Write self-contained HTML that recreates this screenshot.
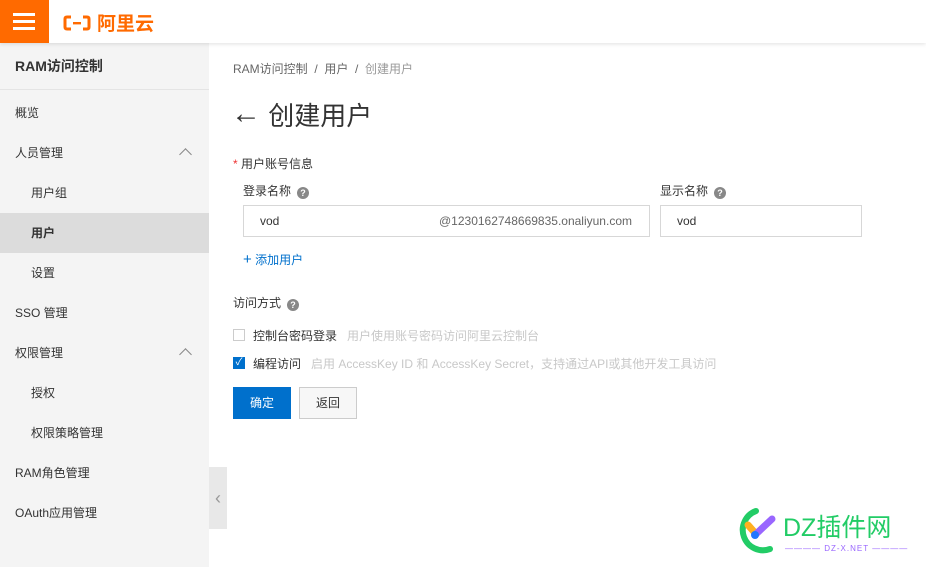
<!DOCTYPE html>
<html><head><meta charset="utf-8"><style>
*{margin:0;padding:0;box-sizing:border-box}
body{width:926px;height:567px;overflow:hidden;background:#fff;font-family:"Liberation Sans","Noto Sans CJK SC",sans-serif;color:#333;position:relative;font-size:12px}
.top{position:absolute;left:0;top:0;width:926px;height:43px;background:#fff;box-shadow:0 1px 4px rgba(0,0,0,.12);z-index:2}
.burger{position:absolute;left:0;top:0;width:49px;height:43px;background:#ff6a00}
.burger i{position:absolute;left:13px;width:22px;height:3px;background:#fff}
.logo{position:absolute;left:62px;top:9px;color:#ff6a00;font-size:19px;font-weight:bold;display:flex;align-items:center;gap:5px}
.side{position:absolute;left:0;top:43px;width:209px;height:524px;background:#f4f4f4}
.side .t{height:47px;line-height:47px;padding-left:15px;font-size:14px;font-weight:bold;color:#333;border-bottom:1px solid #e4e4e4}
.side div.i{position:absolute;left:0;width:209px;height:40px;line-height:40px;padding-left:15px;font-size:12px;color:#333}
.side div.s{padding-left:31px}
.side .act{background:#dcdcdc;font-weight:bold}
.chev{position:absolute;right:19px;top:17px;width:9px;height:9px;border-left:1px solid #888;border-top:1px solid #888;transform:rotate(45deg)}
.tab{position:absolute;left:209px;top:467px;width:18px;height:62px;background:#e8e8e8;color:#999;font-size:18px;line-height:62px;text-align:center}
.a{position:absolute;white-space:nowrap}
.q{display:inline-block;width:12px;height:12px;border-radius:50%;background:#888;color:#fff;font-size:9px;line-height:12px;text-align:center;font-weight:bold;vertical-align:-1px;margin-left:6px}
.inp{position:absolute;height:32px;border:1px solid #d7d7d7;line-height:30px;padding-left:16px;font-size:12px;color:#333}
.cb{position:absolute;width:12px;height:12px;border:1px solid #ccc;background:#fff}
.g{color:#c8c8c8}
</style></head><body>
<div class="top">
<div class="burger"><i style="top:13px"></i><i style="top:20px"></i><i style="top:27px"></i></div>
<div class="logo"><svg width="30" height="18" viewBox="0 0 30 18"><path d="M9 3H5Q3 3 3 5V13Q3 15 5 15H9M21 3H25Q27 3 27 5V13Q27 15 25 15H21" fill="none" stroke="#ff6a00" stroke-width="3"/><rect x="11" y="8" width="8" height="2.4" fill="#ff6a00"/></svg><span>阿里云</span></div>
</div>
<div class="side">
<div class="t">RAM访问控制</div>
<div class="i" style="top:50px">概览</div>
<div class="i" style="top:90px">人员管理<span class="chev"></span></div>
<div class="i s" style="top:130px">用户组</div>
<div class="i s act" style="top:170px">用户</div>
<div class="i s" style="top:210px">设置</div>
<div class="i" style="top:250px">SSO 管理</div>
<div class="i" style="top:290px">权限管理<span class="chev"></span></div>
<div class="i s" style="top:330px">授权</div>
<div class="i s" style="top:370px">权限策略管理</div>
<div class="i" style="top:410px">RAM角色管理</div>
<div class="i" style="top:450px">OAuth应用管理</div>
</div>
<div class="tab">‹</div>
<div class="a" style="left:233px;top:60px;color:#666">RAM访问控制 &nbsp;/&nbsp; 用户 &nbsp;/&nbsp; <span style="color:#999">创建用户</span></div>
<div class="a" style="left:231px;top:96px;font-size:26px;color:#333"><span style="font-size:30px;display:inline-block;transform:translateY(-2px)">←</span> 创建用户</div>
<div class="a" style="left:233px;top:155px"><span style="color:#e33">*</span> 用户账号信息</div>
<div class="a" style="left:243px;top:182px">登录名称<span class="q">?</span></div>
<div class="a" style="left:660px;top:182px">显示名称<span class="q">?</span></div>
<div class="inp" style="left:243px;top:205px;width:407px">vod<span style="position:absolute;right:17px;color:#666">@1230162748669835.onaliyun.com</span></div>
<div class="inp" style="left:660px;top:205px;width:202px">vod</div>
<div class="a" style="left:243px;top:251px;color:#0070cc"><span style="font-size:15px">+</span> 添加用户</div>
<div class="a" style="left:233px;top:294px">访问方式<span class="q">?</span></div>
<div class="cb" style="left:233px;top:329px"></div>
<div class="a" style="left:253px;top:327px">控制台密码登录 &nbsp;&nbsp;<span class="g">用户使用账号密码访问阿里云控制台</span></div>
<div class="cb" style="left:233px;top:357px;background:#0070cc;border-color:#0070cc;color:#fff;font-size:10px;line-height:10px;text-align:center">✓</div>
<div class="a" style="left:253px;top:355px">编程访问 &nbsp;&nbsp;<span class="g">启用 AccessKey ID 和 AccessKey Secret，支持通过API或其他开发工具访问</span></div>
<div class="a" style="left:233px;top:387px;width:58px;height:32px;background:#0070cc;color:#fff;line-height:32px;text-align:center">确定</div>
<div class="a" style="left:299px;top:387px;width:58px;height:32px;background:#f7f7f7;border:1px solid #ccc;line-height:30px;text-align:center">返回</div>
<svg class="a" style="left:730px;top:505px" width="50" height="52" viewBox="0 0 50 52"><path d="M26 6A20 20 0 1 0 40 44" fill="none" stroke="#22cc66" stroke-width="6" stroke-linecap="round"/><path d="M18 20L26 29" stroke="#ffb020" stroke-width="7" stroke-linecap="round"/><path d="M26 29L42 14" stroke="#9966ff" stroke-width="7" stroke-linecap="round"/><circle cx="25" cy="30" r="4" fill="#2277ff"/></svg>
<div class="a" style="left:783px;top:508px;font-size:25px;color:#22cc66">DZ插件网</div>
<div class="a" style="left:785px;top:544px;font-size:8px;color:#9966ff;letter-spacing:1px">———— DZ-X.NET ————</div>
</body></html>
